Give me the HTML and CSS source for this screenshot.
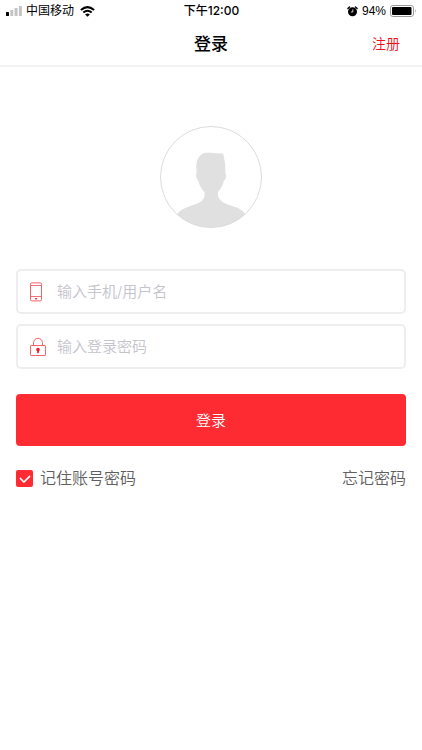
FILE: index.html
```html
<!DOCTYPE html>
<html lang="zh-CN">
<head>
<meta charset="utf-8">
<meta name="viewport" content="width=device-width, initial-scale=1">
<title>登录</title>
<link rel="stylesheet" href="styles.css">
</head>
<body>
<header class="top">
  <div class="status">
    <div class="status-side">
      <svg class="signal" width="16" height="10" viewBox="0 0 16 10" aria-hidden="true">
        <rect x="0" y="6" width="3" height="4" rx="0.6" fill="#000"/>
        <rect x="4.3" y="4" width="3" height="6" rx="0.6" fill="#c4c4c4"/>
        <rect x="8.6" y="2" width="3" height="8" rx="0.6" fill="#c4c4c4"/>
        <rect x="12.9" y="0" width="3" height="10" rx="0.6" fill="#c4c4c4"/>
      </svg>
      <span>中国移动</span>
      <svg class="wifi" width="15" height="11" viewBox="0 0 15 11" aria-hidden="true">
        <path d="M0.9 4Q7.5-1.7 14.1 4M3.3 6.6Q7.5 3 11.7 6.6" fill="none" stroke="#000" stroke-width="2"/>
        <path d="M5.1 8.4Q7.5 6.4 9.9 8.4L7.5 10.8Z" fill="#000"/>
      </svg>
    </div>
    <span class="time">下午12:00</span>
    <div class="status-side status-end">
      <svg class="alarm" width="11" height="11" viewBox="0 0 11 11" aria-hidden="true">
        <circle cx="5.5" cy="5.8" r="4.5" fill="#000"/>
        <path d="M0.9 2.5 2.5 1M8.5 1 10.1 2.5" stroke="#000" stroke-width="1.4" stroke-linecap="round"/>
        <path d="M5.8 3.4V6H3.9" fill="none" stroke="#fff" stroke-width="0.8"/>
      </svg>
      <span class="percent">94%</span>
      <svg class="battery" width="27" height="12" viewBox="0 0 27 12" aria-hidden="true">
        <rect x="0.5" y="0.5" width="23" height="11" rx="2.4" fill="#fff" stroke="#999"/>
        <rect x="2" y="2" width="19.5" height="8" rx="1" fill="#000"/>
        <path d="M25 4Q26.6 6 25 8Z" fill="#999"/>
      </svg>
    </div>
  </div>
  <nav class="nav">
    <h1 class="title">登录</h1>
    <a class="register" href="#register">注册</a>
  </nav>
</header>
<main class="content">
  <svg class="avatar" width="102" height="102" viewBox="0 0 102 102" role="img" aria-label="头像">
    <defs><clipPath id="disc"><circle cx="51" cy="51" r="50.5"/></clipPath></defs>
    <path clip-path="url(#disc)" fill="#e0e0e0" d="M36.5 44C35.6 36 38.5 29 43.5 27.3C49 25.8 56 28.4 62.5 27.2Q64 27.8 63.8 31C65 36 65.5 40 65.3 43.5V47.5Q66.6 48.5 66 51Q65.2 54 63.8 55C62.5 60 60.5 63 58 66V70C60 75 63 76.5 67 78.2C75 81 84 83 86 90V102H17V89C19 83 28 81 36 78C40 76.5 43.5 74.5 44.5 70V66C41.5 63 39.5 59.5 38.3 55Q36.8 53.5 36.2 50.5Q35.6 48.5 36.5 47.5Z"/>
    <circle cx="51" cy="51" r="50.5" fill="none" stroke="#dcdcdc"/>
  </svg>
  <form class="form">
    <div class="field">
      <label for="account" aria-label="手机/用户名">
        <svg width="18" height="20" viewBox="0 0 18 20" fill="none" stroke="#f5646a" aria-hidden="true">
          <rect x="1.5" y="0.9" width="11" height="18" rx="1.2"/>
          <path d="M1.5 3.5H12.5M1.5 14.5H12.5" stroke-width="0.9"/>
          <path d="M6 16.8H8.2" stroke="#e8202a" stroke-width="1.2"/>
        </svg>
      </label>
      <input id="account" class="input" type="text" placeholder="输入手机/用户名">
    </div>
    <div class="field">
      <label for="password" aria-label="登录密码">
        <svg width="18" height="20" viewBox="0 0 18 20" fill="none" stroke="#f5646a" aria-hidden="true">
          <rect x="1.5" y="8.5" width="15" height="10" rx="0.6"/>
          <path d="M4.5 8.5V5.8A4.5 4.5 0 0 1 13.5 5.8V8.5"/>
          <path d="M9 10.7A1.8 1.8 0 0 1 10 14L9.7 16.2H8.3L8 14A1.8 1.8 0 0 1 9 10.7Z" fill="#e8202a" stroke="none"/>
        </svg>
      </label>
      <input id="password" class="input" type="password" placeholder="输入登录密码">
    </div>
    <button class="submit" type="submit">登录</button>
    <div class="options">
      <label class="remember"><input class="check" type="checkbox" checked>记住账号密码</label>
      <a class="forgot" href="#forgot">忘记密码</a>
    </div>
  </form>
</main>
</body>
</html>
```
FILE: styles.css
```css
* {
  box-sizing: border-box;
}

body {
  margin: 0;
  background: #fff;
  color: #000;
  font-family: Inter, "Noto Sans CJK SC", sans-serif;
}

a {
  text-decoration: none;
}

svg {
  display: block;
}

.top {
  border-bottom: 2px solid #f2f2f2;
}

.status,
.nav {
  display: grid;
  grid-template-columns: 1fr auto 1fr;
  align-items: center;
}

.status {
  height: 22px;
  padding: 0 5px 0 6px;
  font-size: 12px;
  line-height: 22px;
}

.status-side {
  display: flex;
  align-items: center;
  gap: 4px;
}

.status-end {
  justify-content: flex-end;
}

.wifi {
  margin-left: 2px;
}

.time {
  font-weight: 500;
}

.percent {
  font-family: "Liberation Sans", sans-serif;
}

.nav {
  height: 43px;
  padding: 0 22px;
}

.title {
  grid-column: 2;
  margin: 0;
  font-size: 17px;
  font-weight: 500;
  line-height: 24px;
}

.register {
  justify-self: end;
  color: #f01018;
  font-size: 14px;
  font-weight: 350;
  line-height: 24px;
}

.content {
  padding: 59px 16px 0;
}

.avatar {
  margin: 0 auto 41px;
}

.form {
  display: flex;
  flex-direction: column;
  gap: 10px;
}

.field {
  display: flex;
  align-items: center;
  gap: 10px;
  height: 45px;
  padding: 0 11px;
  border: 2px solid #eee;
  border-radius: 5px;
}

.input {
  flex: 1;
  min-width: 0;
  height: 40px;
  padding: 0;
  border: 0;
  outline: 0;
  background: none;
  color: #333;
  font: inherit;
  font-size: 15px;
  font-weight: 350;
}

.input::placeholder {
  color: #c4c4cb;
  opacity: 1;
}

.submit {
  height: 52px;
  margin-top: 15px;
  padding: 0 0 2px;
  border: 0;
  border-radius: 4px;
  background: #ff2b33;
  color: #fff;
  font: inherit;
  font-size: 15px;
  font-weight: 350;
}

.options {
  display: flex;
  align-items: center;
  justify-content: space-between;
  margin-top: 10px;
  color: #606060;
  font-size: 16px;
  font-weight: 350;
  line-height: 24px;
}

.remember {
  display: flex;
  align-items: center;
  gap: 7px;
}

.check {
  appearance: none;
  display: grid;
  place-items: center;
  width: 17px;
  height: 17px;
  margin: 0;
  border-radius: 2px;
  background: #ff2b33;
}

.check:checked::before {
  content: "";
  width: 8px;
  height: 5px;
  border: solid #fff;
  border-width: 0 0 2px 2px;
  border-radius: 1px;
  transform: translateY(-1px) rotate(-45deg);
}

.forgot {
  color: inherit;
}
```
